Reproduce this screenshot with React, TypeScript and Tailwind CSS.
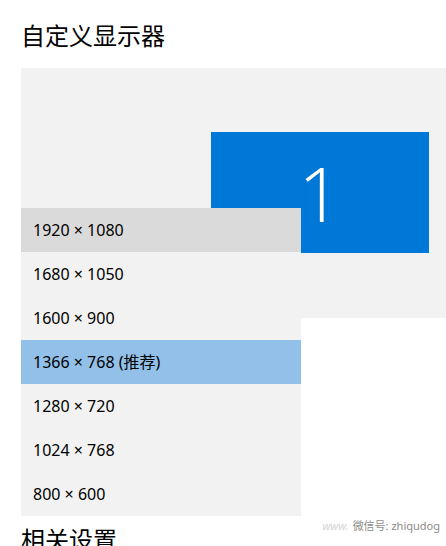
const resolutions = [
  { label: '1920 × 1080', state: 'hover' },
  { label: '1680 × 1050', state: 'normal' },
  { label: '1600 × 900', state: 'normal' },
  { label: '1366 × 768 (推荐)', state: 'selected' },
  { label: '1280 × 720', state: 'normal' },
  { label: '1024 × 768', state: 'normal' },
  { label: '800 × 600', state: 'normal' },
];

const rowClass: Record<string, string> = {
  hover: 'bg-[#dadada]',
  selected: 'bg-[#92c0e8]',
  normal: 'bg-[#f2f2f2]',
};

const App = () => {
  return (
    <div
      className="relative h-[546px] w-[446px] overflow-hidden bg-white text-black"
      style={{ fontFamily: '"Noto Sans", "Noto Sans CJK SC", sans-serif' }}
    >
      {/* Header */}
      <h1 className="pl-[21px] pt-[20px] text-[24px] leading-[32px] font-normal">自定义显示器</h1>

      {/* Monitor arrangement area */}
      <div className="relative ml-[21px] mt-[16px]">
        <div className="h-[250px] bg-[#f2f2f2] pt-[64px] pl-[190px]">
          <div className="flex h-[121px] w-[218px] items-center justify-center bg-[#0078d7]">
            <span className="text-[76px] leading-none text-white" style={{ fontFamily: '"Open Sans", sans-serif', fontWeight: 300 }}>
              1
            </span>
          </div>
        </div>

        {/* Resolution dropdown */}
        <ul className="absolute left-0 top-[140px] z-10 w-[280px] bg-[#f2f2f2]">
          {resolutions.map((r) => (
            <li
              key={r.label}
              className={`flex h-[44px] items-center pl-[12px] text-[16px] ${rowClass[r.state]}`}
            >
              {r.label}
            </li>
          ))}
        </ul>
      </div>

      {/* Related settings */}
      <h2 className="pl-[21px] pt-[206px] text-[24px] leading-[32px] font-normal">相关设置</h2>

      <div className="absolute right-[6px] top-[518px] flex items-baseline gap-1 text-[11px] text-[#8a8a8a]">
        <span className="italic text-[#d4d4d4]">www.</span>
        <span>微信号: zhiqudog</span>
      </div>
    </div>
  );
};

export default App;
